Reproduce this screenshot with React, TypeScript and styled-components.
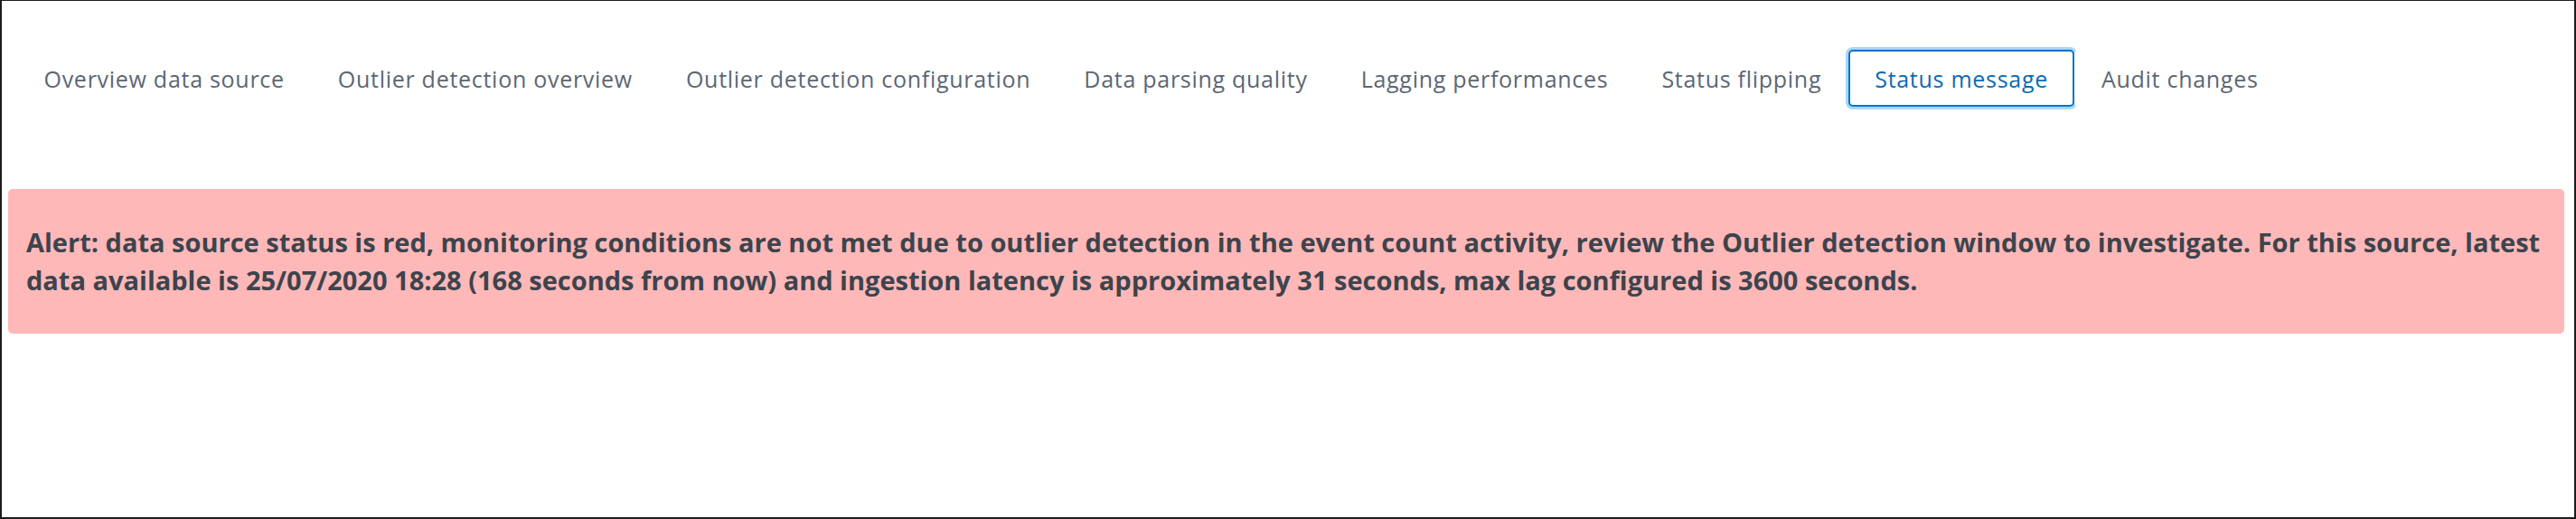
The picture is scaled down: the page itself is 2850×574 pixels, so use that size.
import React from "react";
import styled, { createGlobalStyle } from "styled-components";

const Global = createGlobalStyle`
  html, body { margin: 0; padding: 0; background: #ffffff; }
  * { box-sizing: border-box; }
`;

const Frame = styled.div`
  width: 2850px;
  height: 574px;
  border-style: solid;
  border-color: #1c1c1c;
  border-width: 1px 2px 2px 2px;
  background: #ffffff;
  display: flex;
  flex-direction: column;
  font-family: "Open Sans", Lato, sans-serif;
`;

const TabBar = styled.div`
  display: flex;
  align-items: center;
  margin-top: 54px;
  padding-left: 17px;
`;

const Tab = styled.button<{ $active?: boolean }>`
  font-family: "Open Sans", Lato, sans-serif;
  font-size: 25px;
  letter-spacing: 0.72px;
  line-height: 28px;
  height: 63px;
  padding: 0 27.5px;
  background: #ffffff;
  color: ${(p) => (p.$active ? "#0b6cb3" : "#5c6773")};
  border: 2px solid ${(p) => (p.$active ? "#0a74c2" : "transparent")};
  border-radius: 5px;
  box-shadow: ${(p) => (p.$active ? "0 0 0 3px rgba(92, 183, 250, 0.55)" : "none")};
  cursor: pointer;
`;

const Alert = styled.div`
  margin: 91px 11px 0 7px;
  height: 160px;
  background: #ffb8b8;
  border-radius: 5px;
  padding: 0 20px;
  display: flex;
  align-items: center;
`;

const AlertText = styled.p`
  margin: 0;
  font-family: "Open Sans", Lato, sans-serif;
  font-weight: 700;
  font-size: 29px;
  line-height: 42px;
  color: #3c444d;
`;

const tabs = [
  "Overview data source",
  "Outlier detection overview",
  "Outlier detection configuration",
  "Data parsing quality",
  "Lagging performances",
  "Status flipping",
  "Status message",
  "Audit changes",
];

export default function App() {
  return (
    <>
      <Global />
      <Frame>
        <TabBar>
          {tabs.map((t) => (
            <Tab key={t} $active={t === "Status message"}>
              {t}
            </Tab>
          ))}
        </TabBar>
        <Alert>
          <AlertText>
            Alert: data source status is red, monitoring conditions are not met due to outlier detection in the event count activity, review the Outlier detection window to investigate. For this source, latest data available is 25/07/2020 18:28 (168 seconds from now) and ingestion latency is approximately 31 seconds, max lag configured is 3600 seconds.
          </AlertText>
        </Alert>
      </Frame>
    </>
  );
}
